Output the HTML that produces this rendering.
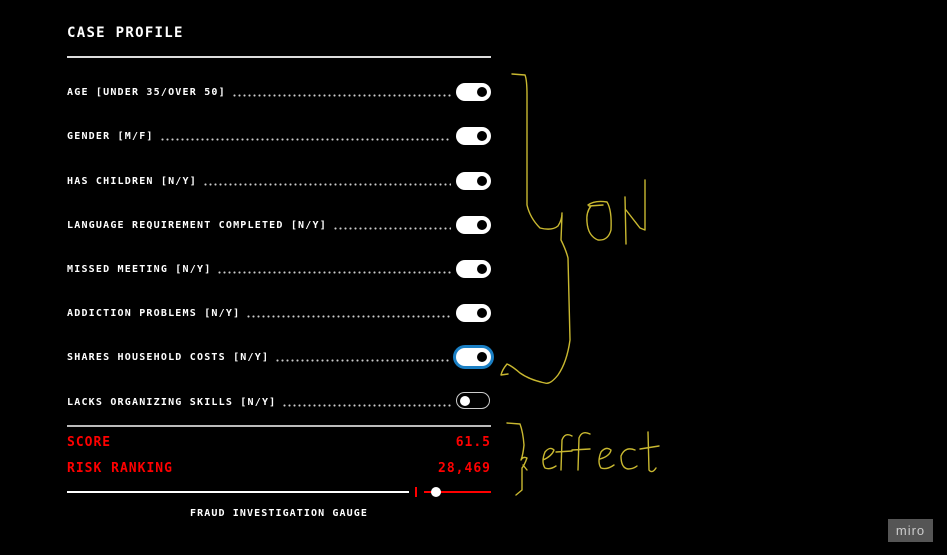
<!DOCTYPE html>
<html><head><meta charset="utf-8"><style>
body{margin:0;width:947px;height:555px;background:#000;overflow:hidden;position:relative;font-family:"DejaVu Sans Mono","Liberation Mono",monospace;font-weight:bold;color:#fff}
.t{position:absolute;left:67px;top:25px;font-size:14px;letter-spacing:1.3px}
.hl{position:absolute;left:67px;width:424px;height:2px;background:#ddd}
.row{position:absolute;left:67px;width:386px;font-size:10px;letter-spacing:1.2px;display:flex;align-items:center;height:14px}
.row span.d{flex:1;margin:0 2px 0 6px;height:10px;background:radial-gradient(circle,#ccc 0.9px,transparent 1.2px) 0 7px/5px 3px repeat-x}
.tg{position:absolute;left:456px;width:35px;height:18px;border-radius:9px;background:#fff}
.tg::after{content:"";position:absolute;right:4px;top:4px;width:10px;height:10px;border-radius:50%;background:#000}
.off{background:#000;border:1.5px solid #ccc;width:32px;height:15px}
.off::after{background:#fff;left:3px;right:auto;top:2.5px}
.red{position:absolute;color:#f00;font-size:13px;letter-spacing:1px}
</style></head><body>
<div class="t">CASE PROFILE</div>
<div class="hl" style="top:56px"></div>
<div class="row" style="top:85px">AGE [UNDER 35/OVER 50]<span class="d"></span></div><div class="tg" style="top:83px"></div>
<div class="row" style="top:129px">GENDER [M/F]<span class="d"></span></div><div class="tg" style="top:127px"></div>
<div class="row" style="top:174px">HAS CHILDREN [N/Y]<span class="d"></span></div><div class="tg" style="top:172px"></div>
<div class="row" style="top:218px">LANGUAGE REQUIREMENT COMPLETED [N/Y]<span class="d"></span></div><div class="tg" style="top:216px"></div>
<div class="row" style="top:262px">MISSED MEETING [N/Y]<span class="d"></span></div><div class="tg" style="top:260px"></div>
<div class="row" style="top:306px">ADDICTION PROBLEMS [N/Y]<span class="d"></span></div><div class="tg" style="top:304px"></div>
<div class="row" style="top:350px">SHARES HOUSEHOLD COSTS [N/Y]<span class="d"></span></div><div class="tg" style="top:348px;box-shadow:0 0 0 3px #1a7fc4"></div>
<div class="row" style="top:395px">LACKS ORGANIZING SKILLS [N/Y]<span class="d"></span></div><div class="tg off" style="top:392px"></div>
<div class="hl" style="top:425px;background:#bbb"></div>
<div class="red" style="left:67px;top:435px">SCORE</div><div class="red" style="right:456px;top:435px">61.5</div>
<div class="red" style="left:67px;top:461px">RISK RANKING</div><div class="red" style="right:456px;top:461px">28,469</div>
<div style="position:absolute;left:67px;top:491px;width:342px;height:2px;background:#fff"></div>
<div style="position:absolute;left:415px;top:487px;width:2px;height:10px;background:#f00"></div>
<div style="position:absolute;left:424px;top:491px;width:67px;height:2px;background:#f00"></div>
<div style="position:absolute;left:431px;top:487px;width:10px;height:10px;border-radius:50%;background:#fff"></div>
<div style="position:absolute;left:190px;top:508px;font-size:10px;letter-spacing:1.1px">FRAUD INVESTIGATION GAUGE</div>
<div style="position:absolute;left:888px;top:519px;width:45px;height:23px;background:#555;color:#ccc;font-family:'Liberation Sans',sans-serif;font-weight:normal;font-size:13px;text-align:center;line-height:23px;letter-spacing:1px">miro</div>
<svg width="947" height="555" style="position:absolute;left:0;top:0" fill="none" stroke="#c9b830" stroke-width="1.4" stroke-linecap="round" stroke-linejoin="round">
<path d="M512 74 L525 75 Q527 80 527 95 L527 205 Q530 218 540 228 Q552 231 558 226 Q562 220 562 213 M562 215 L561 240 Q566 250 568 258 L570 340 Q567 362 558 375 Q550 385 545 383 Q530 380 520 373 Q512 366 507 364 Q502 370 501 375 L508 374"/>
<path d="M588 205 Q595 200 607 202 Q612 210 611 230 Q608 241 598 240 Q588 236 587 222 Q586 212 591 206 M589 206 L603 205"/>
<path d="M625 197 L626 244 M626 210 L640 228 L645 230 L645 180"/>
<path d="M507 423 L520 424 Q523 432 524 445 Q523 455 521 460 Q523 456 527 458 Q524 466 522 468 L522 490 L516 495 M523 465 L527 470"/>
<path d="M543 460 Q552 456 554 450 Q550 446 545 452 Q541 462 545 468 Q550 470 556 466"/>
<path d="M561 470 L562 440 Q565 432 572 436 M556 452 L572 451"/>
<path d="M578 470 L579 438 Q582 430 590 434 M572 450 L590 449"/>
<path d="M600 459 Q610 456 611 450 Q606 446 601 452 Q597 462 601 468 Q607 470 614 465"/>
<path d="M635 450 Q625 446 621 456 Q621 468 628 469 Q633 469 637 466"/>
<path d="M648 432 L649 470 Q652 474 656 468 M640 449 L659 446"/>
</svg>
</body></html>
